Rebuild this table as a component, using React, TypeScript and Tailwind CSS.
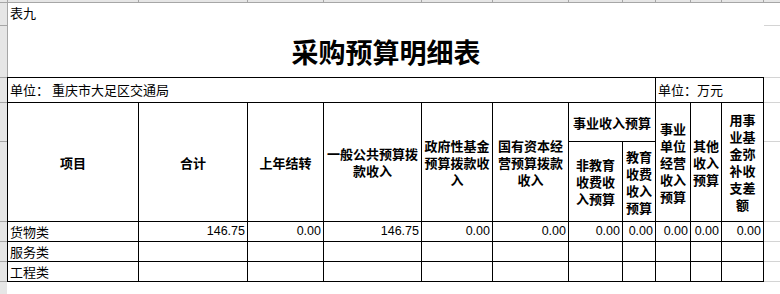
import React from 'react';

const CJK = "font-['Noto_Sans_CJK_SC',sans-serif]";
const NUM = "font-['Liberation_Sans',sans-serif]";

// widths of columns A..K (each includes its left border line)
const colWidths = [
  'w-[131px]',
  'w-[109px]',
  'w-[76px]',
  'w-[98px]',
  'w-[71px]',
  'w-[76px]',
  'w-[54px]',
  'w-[33px]',
  'w-[35px]',
  'w-[31px]',
  'w-[42px]',
];

// row heights from the top of the sheet (each includes its bottom line)
const rowHeights = [
  'h-[23px]',
  'h-[52px]',
  'h-[25px]',
  'h-[39px]',
  'h-[80px]',
  'h-[20px]',
  'h-[20px]',
  'h-[20px]',
  'h-[20px]',
];

const rows = [
  {
    name: '货物类',
    values: ['146.75', '0.00', '146.75', '0.00', '0.00', '0.00', '0.00', '0.00', '0.00', '0.00'],
  },
  { name: '服务类', values: Array(10).fill('') },
  { name: '工程类', values: Array(10).fill('') },
];

function Head({ lines, className = '' }: { lines: string[]; className?: string }) {
  return (
    <div
      className={`flex items-center justify-center border-l border-t border-black text-center text-[13px] font-bold leading-[17px] ${className}`}
    >
      <p>
        {lines.map((l, i) => (
          <React.Fragment key={i}>
            {i > 0 && <br />}
            {l}
          </React.Fragment>
        ))}
      </p>
    </div>
  );
}

export default function App() {
  return (
    <div className={`w-[780px] h-[294px] overflow-hidden bg-white text-black ${CJK}`}>
      {/* column header strip */}
      <div className="flex h-[3px] bg-[#e6e6e6] border-b border-[#a6a6a6]">
        <div className="w-[8px] shrink-0 border-r border-[#a6a6a6]" />
        {colWidths.map((w, i) => (
          <div key={i} className={`${w} shrink-0 border-r border-[#a6a6a6]`} />
        ))}
      </div>

      <div className="flex h-[291px]">
        {/* row header strip */}
        <div className="w-[7px] shrink-0 bg-[#e6e6e6]">
          {rowHeights.map((h, i) => (
            <div key={i} className={`${h} border-b border-[#a6a6a6]`} />
          ))}
        </div>

        {/* sheet */}
        <div className="w-[757px] shrink-0">
          <div className="border-l border-[#a6a6a6]">
            <div className="h-[23px] pl-[2px] pt-[1px] text-[13px] leading-[17px]">表九</div>
            <div className="h-[51px] flex items-center justify-center text-[27px] font-bold leading-none">
              采购预算明细表
            </div>
          </div>

          <div className="grid w-[757px] grid-cols-[131px_109px_76px_98px_71px_76px_54px_33px_35px_31px_42px] grid-rows-[25px_39px_80px_20px_20px_20px] border-r border-b border-black">
            <div className="col-span-8 border-l border-t border-black pl-[2px] pt-[3px] text-[13px] leading-[17px]">
              单位： 重庆市大足区交通局
            </div>
            <div className="col-span-3 border-l border-t border-black pl-[2px] pt-[3px] text-[13px] leading-[17px]">
              单位：万元
            </div>

            <Head className="row-span-2" lines={['项目']} />
            <Head className="row-span-2" lines={['合计']} />
            <Head className="row-span-2" lines={['上年结转']} />
            <Head className="row-span-2" lines={['一般公共预算拨', '款收入']} />
            <Head className="row-span-2" lines={['政府性基金', '预算拨款收', '入']} />
            <Head className="row-span-2" lines={['国有资本经', '营预算拨款', '收入']} />
            <Head className="col-span-2" lines={['事业收入预算']} />
            <Head className="row-span-2" lines={['事业', '单位', '经营', '收入', '预算']} />
            <Head className="row-span-2" lines={['其他', '收入', '预算']} />
            <Head className="row-span-2" lines={['用事', '业基', '金弥', '补收', '支差', '额']} />
            <Head lines={['非教育', '收费收', '入预算']} />
            <Head lines={['教育', '收费', '收入', '预算']} />

            {rows.map((r) => (
              <React.Fragment key={r.name}>
                <div className="flex items-center border-l border-t border-black pl-[2px] text-[13px] leading-[17px]">
                  {r.name}
                </div>
                {r.values.map((v, i) => (
                  <div
                    key={i}
                    className={`flex items-center justify-end border-l border-t border-black pr-[2px] text-[12.5px] leading-[17px] ${NUM}`}
                  >
                    {v}
                  </div>
                ))}
              </React.Fragment>
            ))}
          </div>
        </div>

        {/* gridlines right of the table */}
        <div className="flex-1">
          {rowHeights.map((h, i) => (
            <div key={i} className={`${h} border-b border-[#d4d4d4]`} />
          ))}
        </div>
      </div>
    </div>
  );
}
